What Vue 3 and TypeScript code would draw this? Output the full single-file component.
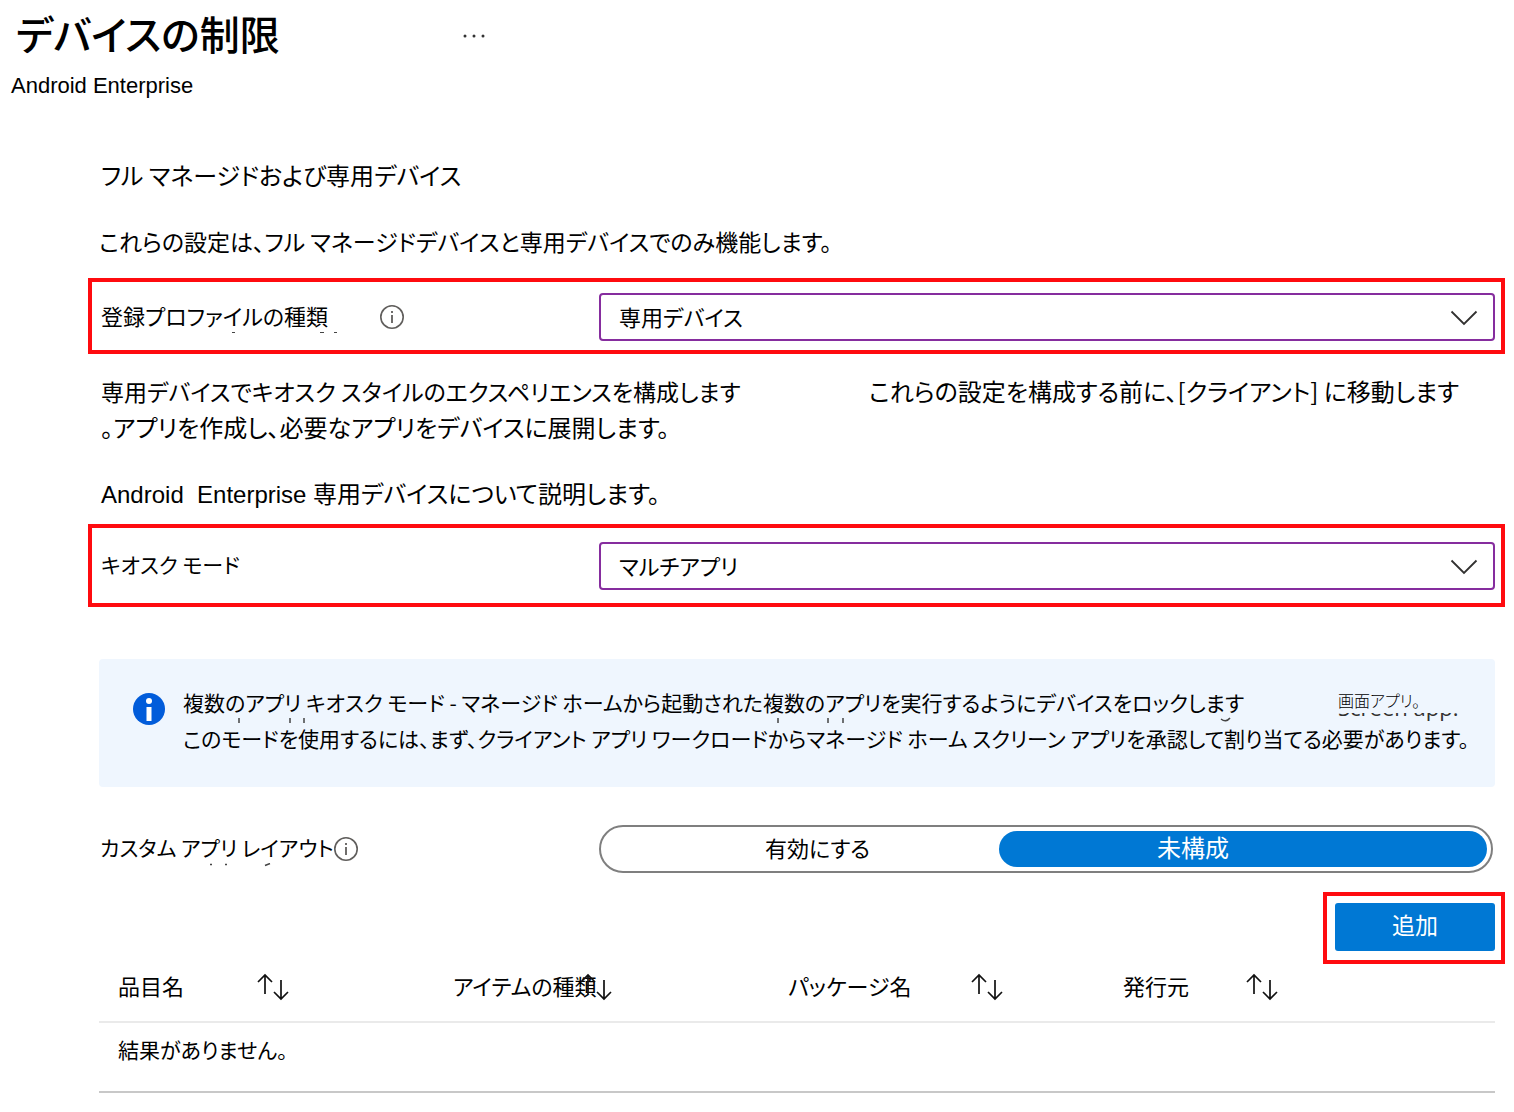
<script setup lang="ts">
import { ref } from 'vue'

interface Column {
  label: string
  width: string
  labelWidth: number
}

const profileType = ref('専用デバイス')
const kioskMode = ref('マルチアプリ')
const layoutMode = ref('none')

const columns: Column[] = [
  { label: '品目名', width: '24%', labelWidth: 138 },
  { label: 'アイテムの種類', width: '24%', labelWidth: 126 },
  { label: 'パッケージ名', width: '24%', labelWidth: 182 },
  { label: '発行元', width: '28%', labelWidth: 122 },
]
</script>

<template>
  <div class="page">
    <header class="header">
      <div class="title-row">
        <h1>デバイスの制限</h1>
        <button class="more" type="button" aria-label="その他">
          <svg width="24" height="6" viewBox="0 0 24 6" fill="#333">
            <circle cx="3" cy="3" r="1.5" />
            <circle cx="12" cy="3" r="1.5" />
            <circle cx="21" cy="3" r="1.5" />
          </svg>
        </button>
      </div>
      <p class="subtitle">Android Enterprise</p>
    </header>

    <main class="content">
      <h2 class="text section-title">フル マネージドおよび専用デバイス</h2>
      <p class="text intro">これらの設定は、フル マネージドデバイスと専用デバイスでのみ機能します。</p>

      <div class="frame row profile">
        <div class="label-cell">
          <label class="caption" for="profile">登録プロファイルの種類
            <svg class="tails" width="240" height="4" viewBox="0 0 240 4" stroke="#444" stroke-width="1">
              <path d="M131 1.500h3M219 1.500h4M233 1.500h3" />
            </svg>
          </label>
          <svg class="info far" width="26" height="26" viewBox="0 0 26 26" fill="none" stroke="#605e5c">
            <circle cx="13" cy="13" r="11.200" stroke-width="1.600" />
            <path d="M13 11v8M13 7v2" stroke-width="1.800" />
          </svg>
        </div>
        <div class="select-box">
          <select id="profile" v-model="profileType">
            <option>専用デバイス</option>
          </select>
          <svg class="chevron" width="28" height="16" viewBox="0 0 28 16" fill="none" stroke="#323130" stroke-width="1.800">
            <path d="M1.500 1.500L14 14L26.500 1.500" />
          </svg>
        </div>
      </div>

      <p class="text kiosk">
        <span class="kiosk-lead">専用デバイスでキオスク スタイルのエクスペリエンスを構成します</span>
        <span>これらの設定を構成する前に、[クライアント] に移動します</span>
        <span class="kiosk-rest">。アプリを作成し、必要なアプリをデバイスに展開します。</span>
      </p>
      <p class="text learn"><span class="latin">Android&nbsp; Enterprise </span>専用デバイスについて説明します。</p>

      <div class="frame row tall">
        <div class="label-cell">
          <label class="caption small" for="kiosk">キオスク モード</label>
        </div>
        <div class="select-box">
          <select id="kiosk" v-model="kioskMode">
            <option>マルチアプリ</option>
          </select>
          <svg class="chevron" width="28" height="16" viewBox="0 0 28 16" fill="none" stroke="#323130" stroke-width="1.800">
            <path d="M1.500 1.500L14 14L26.500 1.500" />
          </svg>
        </div>
      </div>

      <div class="banner">
        <svg class="banner-icon" width="32" height="32" viewBox="0 0 32 32">
          <circle cx="16" cy="16" r="16" fill="#015cda" />
          <circle cx="16" cy="8" r="3" fill="#fff" />
          <rect x="13.500" y="14" width="5" height="14" fill="#fff" />
        </svg>
        <div class="banner-text">
          <p class="banner-line">
            <span>複数のアプリ キオスク モード - マネージド ホームから起動された複数のアプリを実行するようにデバイスをロックします</span>
            <span class="screen-note">
              画面アプリ。
              <span class="under"><span>Screen app.</span></span>
            </span>
            <svg class="tails low" width="1060" height="8" viewBox="0 0 1060 8" fill="none" stroke="#444" stroke-width="1.500">
              <path d="M56 2v5M107 2v5M121 2v5M595 2v5M645 2v5M660 2v5M1038 3q5 4 9-1" />
            </svg>
          </p>
          <p>このモードを使用するには、まず、クライアント アプリ ワークロードからマネージド ホーム スクリーン アプリを承認して割り当てる必要があります。</p>
        </div>
      </div>

      <div class="row toggle-row">
        <div class="label-cell">
          <span id="layout-label" class="caption small">カスタム アプリ レイアウト
            <svg class="tails" width="240" height="4" viewBox="0 0 240 4" stroke="#444" stroke-width="1.500">
              <path d="M110 1.500h2M125 1.500h2M165 2.500l5-2" />
            </svg>
          </span>
          <svg class="info" width="26" height="26" viewBox="0 0 26 26" fill="none" stroke="#605e5c">
            <circle cx="13" cy="13" r="11.200" stroke-width="1.600" />
            <path d="M13 11v8M13 7v2" stroke-width="1.800" />
          </svg>
        </div>
        <div class="toggle" role="radiogroup" aria-labelledby="layout-label">
          <label class="option first">
            <input v-model="layoutMode" type="radio" name="layout" value="enable" />
            <span>有効にする</span>
          </label>
          <label class="option second">
            <input v-model="layoutMode" type="radio" name="layout" value="none" />
            <span>未構成</span>
          </label>
        </div>
      </div>

      <div class="frame add-frame">
        <button class="add" type="button">追加</button>
      </div>

      <table class="items">
        <thead>
          <tr>
            <th v-for="column in columns" :key="column.label" scope="col" :style="{ width: column.width }">
              <div class="head">
                <span class="head-label" :style="{ width: column.labelWidth + 'px' }">{{ column.label }}</span>
                <svg width="34" height="28" viewBox="0 0 34 28" fill="none" stroke="#111" stroke-width="1.700">
                  <path d="M9 21V2M2 9L9 2L16 9M25 7V26M18 19L25 26L32 19" />
                </svg>
              </div>
            </th>
          </tr>
        </thead>
        <tbody>
          <tr>
            <td :colspan="columns.length">結果がありません。</td>
          </tr>
        </tbody>
      </table>
    </main>
  </div>
</template>

<style>
body {
  margin: 0;
  background: #fff;
}
</style>

<style scoped>
.page {
  font-family: "Noto Sans CJK JP", sans-serif;
  font-feature-settings: "palt";
  font-size: 22px;
  line-height: 36px;
  color: #000;
  padding-bottom: 16px;
}

h1,
h2,
p {
  margin: 0;
  font-weight: 400;
}

.header {
  padding: 8px 11px 0;
}

.title-row {
  display: flex;
  align-items: center;
}

h1 {
  width: 451px;
  padding: 0 0 6px 5px;
  box-sizing: border-box;
  font-size: 40px;
  line-height: 50px;
  font-weight: 500;
}

.more {
  display: flex;
  padding: 0;
  border: 0;
  background: none;
}

.subtitle {
  margin-top: 6px;
  font-family: "Liberation Sans", sans-serif;
  font-size: 22px;
  line-height: 32px;
}

.content {
  padding: 55px 9px 0 88px;
}

.text {
  margin-left: 13px;
  font-size: 24px;
}

.intro {
  margin-top: 30px;
  margin-left: 11px;
  font-size: 23px;
}

.frame {
  border: 4px solid #ff0b0f;
  box-sizing: border-box;
}

.row {
  display: grid;
  grid-template-columns: 498px 1fr;
  align-items: center;
  height: 76px;
  margin-top: 19px;
  padding: 0 6px 0 9px;
}

.row.profile {
  padding-top: 2px;
}

.row.tall {
  height: 83px;
  margin-top: 13px;
}

.label-cell {
  display: flex;
  align-items: center;
}

.caption {
  position: relative;
  padding-bottom: 4px;
}

.small {
  font-size: 21px;
}

.tails {
  position: absolute;
  left: 0;
  bottom: 2px;
}

.tails.low {
  bottom: -4px;
}

.info.far {
  margin-left: 51px;
}

.select-box {
  position: relative;
}

select {
  display: block;
  width: 100%;
  height: 48px;
  padding: 0 18px 2px;
  box-sizing: border-box;
  appearance: none;
  border: 2px solid #862d9e;
  border-radius: 4px;
  background: #fff;
  color: #000;
  font: inherit;
  font-feature-settings: inherit;
}

.chevron {
  position: absolute;
  right: 17px;
  top: 17px;
  pointer-events: none;
}

.kiosk {
  display: flex;
  flex-wrap: wrap;
  margin-top: 19px;
}

.kiosk-lead {
  width: 768px;
  font-size: 23px;
}

.kiosk-rest {
  width: 100%;
}

.learn {
  margin-top: 30px;
}

.latin {
  font-family: "Liberation Sans", sans-serif;
  line-height: 24px;
}

.banner {
  display: flex;
  gap: 18px;
  min-height: 128px;
  margin: 52px 10px 0 11px;
  padding: 25px 34px 0;
  box-sizing: border-box;
  border-radius: 4px;
  background: #eff6fe;
  font-size: 21px;
  white-space: nowrap;
}

.banner-icon {
  flex: none;
  margin-top: 9px;
}

.banner-text {
  flex: 1;
}

.banner-line {
  position: relative;
  display: flex;
}

.screen-note {
  position: absolute;
  left: 1155px;
  top: 0;
  font-size: 16px;
  line-height: 32px;
  font-weight: 300;
}

.under {
  position: absolute;
  left: 0;
  bottom: -7px;
  height: 10px;
  overflow: hidden;
  display: flex;
  align-items: flex-end;
  color: #323130;
  font-family: "Open Sans", sans-serif;
  font-size: 22px;
  font-weight: 400;
}

.toggle-row {
  height: 48px;
  margin-top: 38px;
  padding: 0 12px 0 13px;
}

.toggle-row .label-cell {
  margin-left: -1px;
}

.toggle {
  display: grid;
  grid-template-columns: 394fr 488fr;
  height: 48px;
  padding: 4px;
  box-sizing: border-box;
  border: 2px solid #7f7f7f;
  border-radius: 24px;
}

.option {
  position: relative;
  display: flex;
  align-items: center;
  padding-bottom: 4px;
  box-sizing: border-box;
  border-radius: 18px;
  line-height: 32px;
}

.option input {
  position: absolute;
  inset: 0;
  margin: 0;
  opacity: 0;
}

.option.first {
  padding-left: 160px;
}

.option.second {
  padding-left: 158px;
  font-size: 24px;
}

.option:has(input:checked) {
  background: #0078d4;
  color: #fff;
}

.add-frame {
  width: 182px;
  height: 72px;
  margin: 19px 0 0 auto;
  padding: 7px 6px 0 8px;
}

.add {
  display: block;
  width: 100%;
  height: 48px;
  padding: 0 0 6px;
  border: 0;
  border-radius: 3px;
  background: #0078d4;
  color: #fff;
  font: inherit;
  font-size: 23px;
}

.items {
  width: calc(100% - 21px);
  margin-left: 11px;
  border-collapse: collapse;
  table-layout: fixed;
}

th,
td {
  padding: 0 0 0 19px;
  text-align: left;
  font-weight: 400;
}

th {
  height: 58px;
  padding-bottom: 12px;
  box-sizing: border-box;
  border-bottom: 2px solid #eaeaea;
}

td {
  height: 70px;
  padding-bottom: 16px;
  box-sizing: border-box;
  border-bottom: 2px solid #c8c8c8;
  font-size: 21px;
}

.head {
  display: flex;
  align-items: center;
}

.head-label {
  flex: none;
  padding-bottom: 4px;
  white-space: nowrap;
}
</style>
